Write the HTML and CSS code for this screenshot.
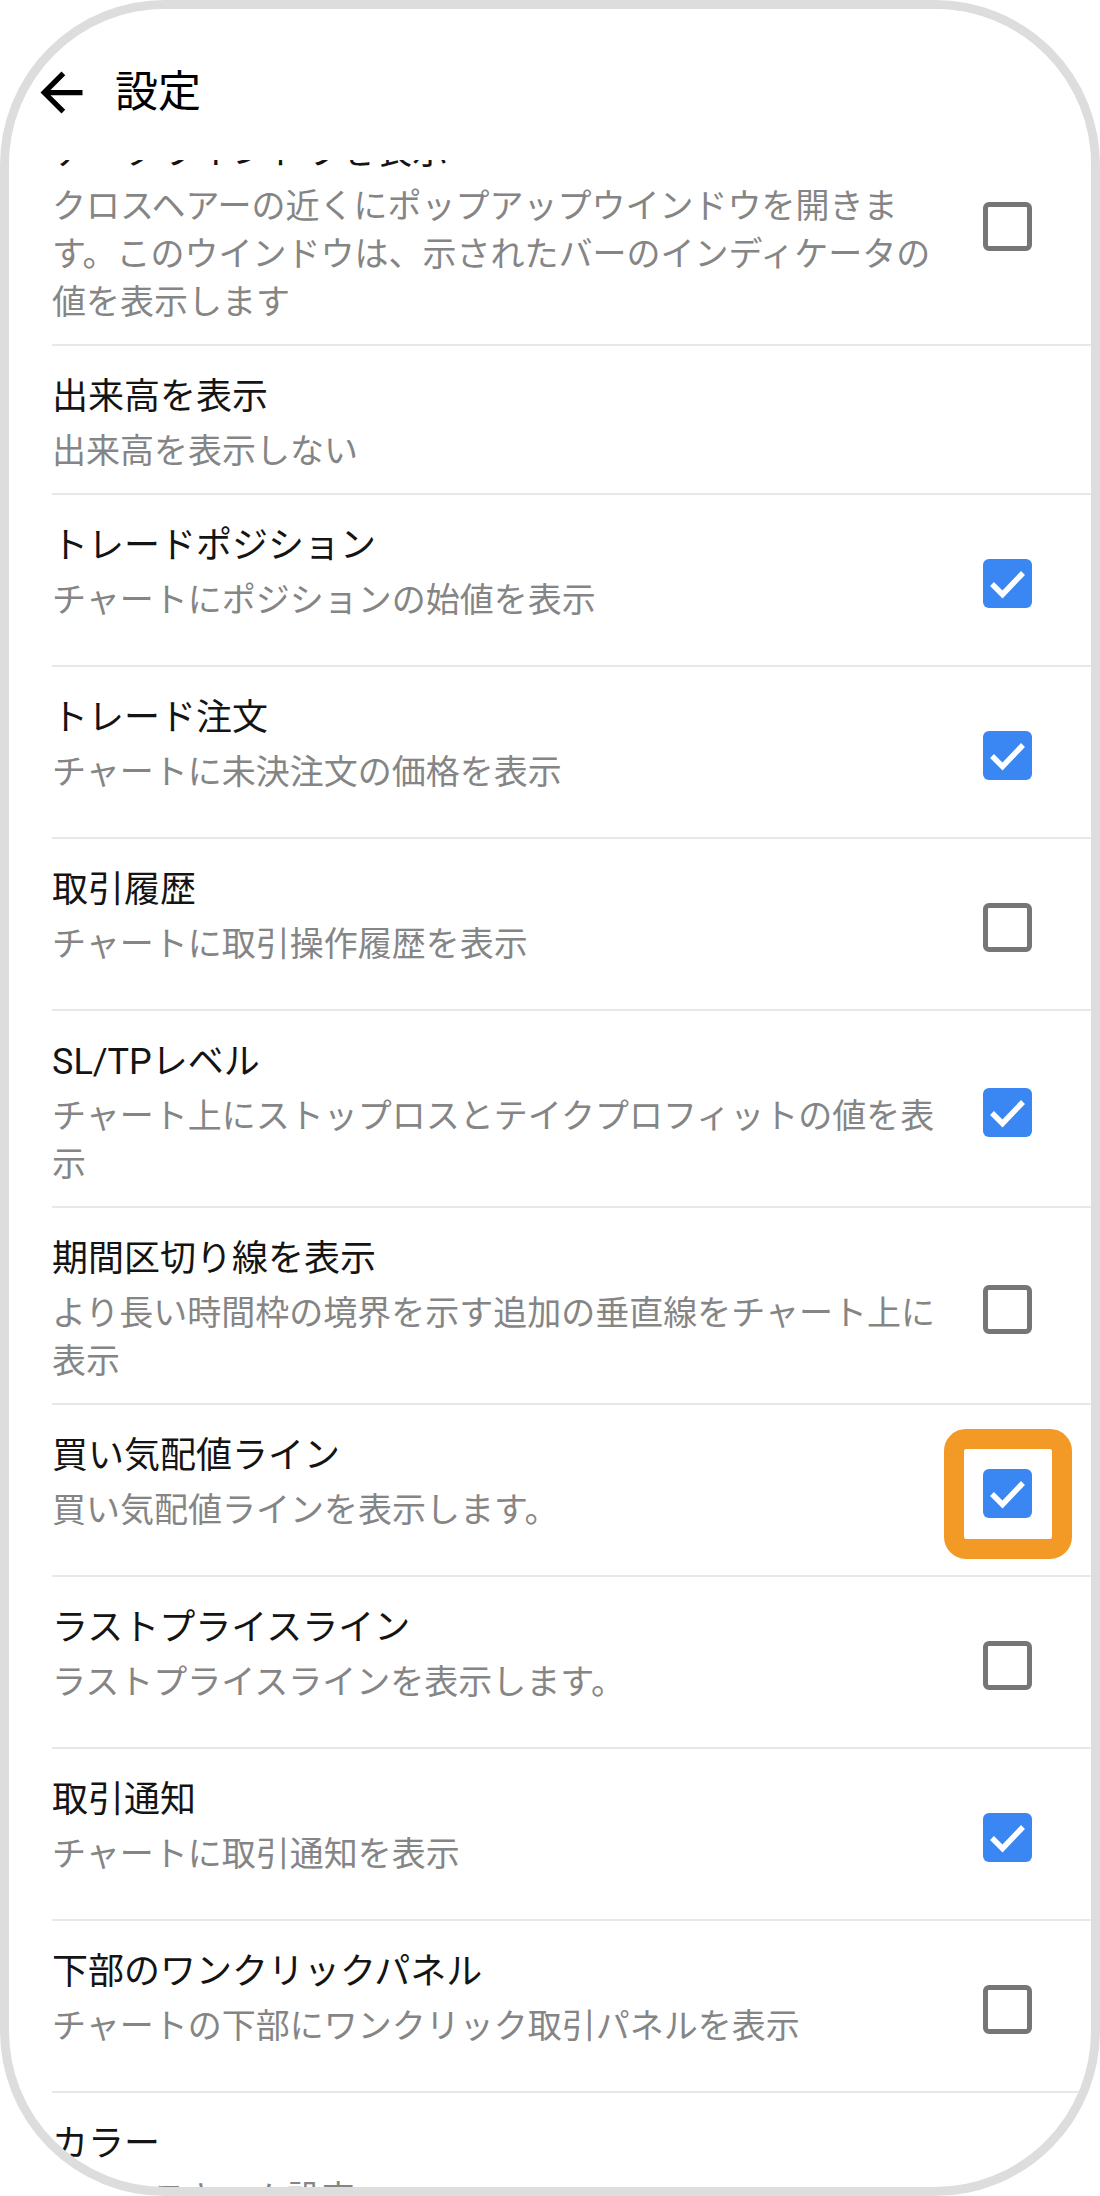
FILE: index.html
```html
<!DOCTYPE html>
<html>
<head>
  <title>設定</title>
  <link rel="stylesheet" href="styles.css">
</head>
<body>
  <div class="phone">
    <div class="appbar">
      <svg class="back" viewBox="0 0 24 24" width="63" height="63">
        <path d="M20 11H7.83l5.59-5.59L12 4l-8 8 8 8 1.41-1.41L7.83 13H20v-2z" fill="#000"/>
      </svg>
      <h1>設定</h1>
    </div>

    <div class="list">
      <div class="row first has-box">
        <div class="text">
          <div class="title">データウインドウを表示</div>
          <div class="desc">クロスヘアーの近くにポップアップウインドウを開きます。このウインドウは、示されたバーのインディケータの値を表示します</div>
        </div>
        <span class="box"></span>
      </div>

      <div class="row">
        <div class="text">
          <div class="title">出来高を表示</div>
          <div class="desc">出来高を表示しない</div>
        </div>
      </div>

      <div class="row has-box">
        <div class="text">
          <div class="title">トレードポジション</div>
          <div class="desc">チャートにポジションの始値を表示</div>
        </div>
        <span class="box checked"><svg viewBox="0 0 49 49"><polyline points="9,25 19.5,35.5 40,14"/></svg></span>
      </div>

      <div class="row has-box">
        <div class="text">
          <div class="title">トレード注文</div>
          <div class="desc">チャートに未決注文の価格を表示</div>
        </div>
        <span class="box checked"><svg viewBox="0 0 49 49"><polyline points="9,25 19.5,35.5 40,14"/></svg></span>
      </div>

      <div class="row has-box">
        <div class="text">
          <div class="title">取引履歴</div>
          <div class="desc">チャートに取引操作履歴を表示</div>
        </div>
        <span class="box"></span>
      </div>

      <div class="row has-box">
        <div class="text">
          <div class="title">SL/TPレベル</div>
          <div class="desc">チャート上にストップロスとテイクプロフィットの値を表示</div>
        </div>
        <span class="box checked"><svg viewBox="0 0 49 49"><polyline points="9,25 19.5,35.5 40,14"/></svg></span>
      </div>

      <div class="row has-box">
        <div class="text">
          <div class="title">期間区切り線を表示</div>
          <div class="desc">より長い時間枠の境界を示す追加の垂直線をチャート上に表示</div>
        </div>
        <span class="box"></span>
      </div>

      <div class="row has-box">
        <div class="text">
          <div class="title">買い気配値ライン</div>
          <div class="desc">買い気配値ラインを表示します。</div>
        </div>
        <span class="box checked marked"><svg viewBox="0 0 49 49"><polyline points="9,25 19.5,35.5 40,14"/></svg></span>
      </div>

      <div class="row has-box">
        <div class="text">
          <div class="title">ラストプライスライン</div>
          <div class="desc">ラストプライスラインを表示します。</div>
        </div>
        <span class="box"></span>
      </div>

      <div class="row has-box">
        <div class="text">
          <div class="title">取引通知</div>
          <div class="desc">チャートに取引通知を表示</div>
        </div>
        <span class="box checked"><svg viewBox="0 0 49 49"><polyline points="9,25 19.5,35.5 40,14"/></svg></span>
      </div>

      <div class="row has-box">
        <div class="text">
          <div class="title">下部のワンクリックパネル</div>
          <div class="desc">チャートの下部にワンクリック取引パネルを表示</div>
        </div>
        <span class="box"></span>
      </div>

      <div class="row">
        <div class="text">
          <div class="title">カラー</div>
          <div class="desc">カラースキーム設定</div>
        </div>
      </div>
    </div>
  </div>
</body>
</html>
```

FILE: styles.css
```css
html, body {
  margin: 0;
  padding: 0;
  background: #fff;
}

body {
  font-family: Roboto, "Noto Sans CJK JP", "Noto Sans", sans-serif;
}

.phone {
  width: 1100px;
  height: 2196px;
  box-sizing: border-box;
  border: 9px solid #dddddd;
  border-radius: 165px;
  overflow: hidden;
  display: flex;
  flex-direction: column;
  background: #fff;
}

.appbar {
  flex: none;
  height: 151px;
  box-sizing: border-box;
  padding: 15px 0 0 21px;
  display: flex;
  align-items: center;
  gap: 22px;
  background: #fff;
  position: relative;
  z-index: 1;
}

.appbar h1 {
  margin: 0;
  font-size: 43px;
  font-weight: 400;
  color: #000;
  line-height: 1;
}

.list {
  flex: 1;
  overflow: hidden;
  padding-left: 43px;
}

.row {
  display: flex;
  box-sizing: border-box;
  padding: 25px 59px 18px 0;
  border-bottom: 2px solid #e8e8e8;
}

.row.first {
  margin-top: -59px;
}

.row.has-box {
  min-height: 172px;
}

.text {
  flex: 1;
  margin-right: 27px;
}

.title {
  font-size: 36px;
  line-height: 52px;
  color: #141414;
}

.desc {
  margin-top: 4px;
  font-size: 34px;
  line-height: 48px;
  color: #858585;
}

.box {
  flex: none;
  align-self: center;
  width: 49px;
  height: 49px;
  box-sizing: border-box;
  border: 5px solid #767676;
  border-radius: 6px;
  position: relative;
}

.box.checked {
  border: none;
  background: #3a86f2;
}

.box svg {
  display: block;
  width: 49px;
  height: 49px;
  fill: none;
  stroke: #fff;
  stroke-width: 5.5;
}

.box.marked::after {
  content: "";
  position: absolute;
  left: -39px;
  top: -40px;
  width: 128px;
  height: 130px;
  box-sizing: border-box;
  border: 20px solid #f39a26;
  border-radius: 22px;
}
```
